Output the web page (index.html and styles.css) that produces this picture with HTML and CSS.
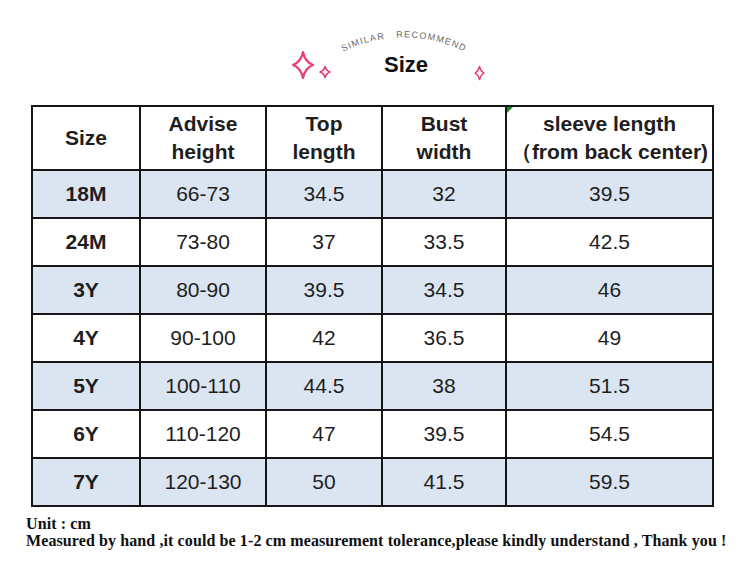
FILE: index.html
```html
<!DOCTYPE html>
<html>
<head>
<meta charset="utf-8">
<link rel="stylesheet" href="styles.css">
</head>
<body>
<div class="page">
  <header class="head">
    <svg class="head-art" width="750" height="105" viewBox="0 0 750 105">
      <defs>
        <path id="arc" d="M 326 62 A 136 136 0 0 1 482 62"/>
      </defs>
      <text class="arc-text"><textPath href="#arc" startOffset="50%" text-anchor="middle">SIMILAR&#160;&#160;&#160;RECOMMEND</textPath></text>
      <g class="spark" fill="none" stroke="#ec3a72" stroke-width="2.2" stroke-linejoin="round">
        <path d="M303 52 Q305 62 313 65 Q305 68 303 78 Q301 68 293 65 Q301 62 303 52 Z"/>
        <path d="M325 66.5 Q326 70.5 330 72 Q326 73.5 325 77.5 Q324 73.5 320 72 Q324 70.5 325 66.5 Z" stroke-width="1.6"/>
        <path d="M479.5 66.5 Q480.5 71 484 73 Q480.5 75 479.5 79.5 Q478.5 75 475 73 Q478.5 71 479.5 66.5 Z" stroke-width="1.4"/>
      </g>
      <text class="title" x="406" y="72" text-anchor="middle">Size</text>
    </svg>
  </header>

  <table class="chart">
    <colgroup>
      <col class="c1"><col class="c2"><col class="c3"><col class="c4"><col class="c5">
    </colgroup>
    <thead>
      <tr>
        <th>Size</th>
        <th>Advise<br>height</th>
        <th>Top<br>length</th>
        <th>Bust<br>width</th>
        <th class="note-cell"><span class="note-mark"></span>sleeve length<br>（from back center)</th>
      </tr>
    </thead>
    <tbody>
      <tr class="alt"><th>18M</th><td>66-73</td><td>34.5</td><td>32</td><td>39.5</td></tr>
      <tr><th>24M</th><td>73-80</td><td>37</td><td>33.5</td><td>42.5</td></tr>
      <tr class="alt"><th>3Y</th><td>80-90</td><td>39.5</td><td>34.5</td><td>46</td></tr>
      <tr><th>4Y</th><td>90-100</td><td>42</td><td>36.5</td><td>49</td></tr>
      <tr class="alt"><th>5Y</th><td>100-110</td><td>44.5</td><td>38</td><td>51.5</td></tr>
      <tr><th>6Y</th><td>110-120</td><td>47</td><td>39.5</td><td>54.5</td></tr>
      <tr class="alt"><th>7Y</th><td>120-130</td><td>50</td><td>41.5</td><td>59.5</td></tr>
    </tbody>
  </table>

  <footer class="foot">
    <p>Unit : cm</p>
    <p>Measured by hand ,it could be 1-2 cm measurement tolerance,please kindly understand , Thank you !</p>
  </footer>
</div>
</body>
</html>
```

FILE: styles.css
```css
html, body {
  margin: 0;
  padding: 0;
  background: #ffffff;
}

.page {
  width: 750px;
  height: 564px;
  overflow: hidden;
  background: #ffffff;
}

.head {
  height: 105px;
}

.head-art {
  display: block;
}

.arc-text {
  font-family: "Liberation Sans", Arial, sans-serif;
  font-size: 9px;
  letter-spacing: 1.2px;
  fill: #6a6a6a;
}

.title {
  font-family: "Liberation Sans", Arial, sans-serif;
  font-weight: bold;
  font-size: 22px;
  fill: #111111;
}

.chart {
  margin-left: 31px;
  border-collapse: collapse;
  table-layout: fixed;
  width: 681px;
  font-family: "Liberation Sans", Arial, sans-serif;
  font-size: 21px;
  color: #1e1e1e;
  border: 2px solid #151515;
}

.c1 { width: 108px; }
.c2 { width: 126px; }
.c3 { width: 116px; }
.c4 { width: 124px; }
.c5 { width: 207px; }

.chart th,
.chart td {
  border: 2px solid #151515;
  text-align: center;
  padding: 0;
  white-space: nowrap;
}

.chart thead th {
  height: 62px;
  line-height: 28px;
  font-weight: bold;
  background: #ffffff;
}

.chart tbody th,
.chart tbody td {
  height: 46px;
}

.chart tbody th {
  font-weight: bold;
}

.chart tbody td {
  font-weight: normal;
}

.chart tr.alt th,
.chart tr.alt td {
  background: #dbe5f1;
}

.note-cell {
  position: relative;
}

.note-mark {
  position: absolute;
  left: 0;
  top: 0;
  width: 0;
  height: 0;
  border-top: 6px solid #1a8a2a;
  border-right: 6px solid transparent;
}

.foot {
  padding: 8px 0 0 26px;
  font-family: "Liberation Serif", "Times New Roman", serif;
  font-weight: bold;
  font-size: 16px;
  line-height: 17px;
  letter-spacing: 0.1px;
  color: #111111;
}

.foot p {
  margin: 0;
  white-space: nowrap;
}
```
